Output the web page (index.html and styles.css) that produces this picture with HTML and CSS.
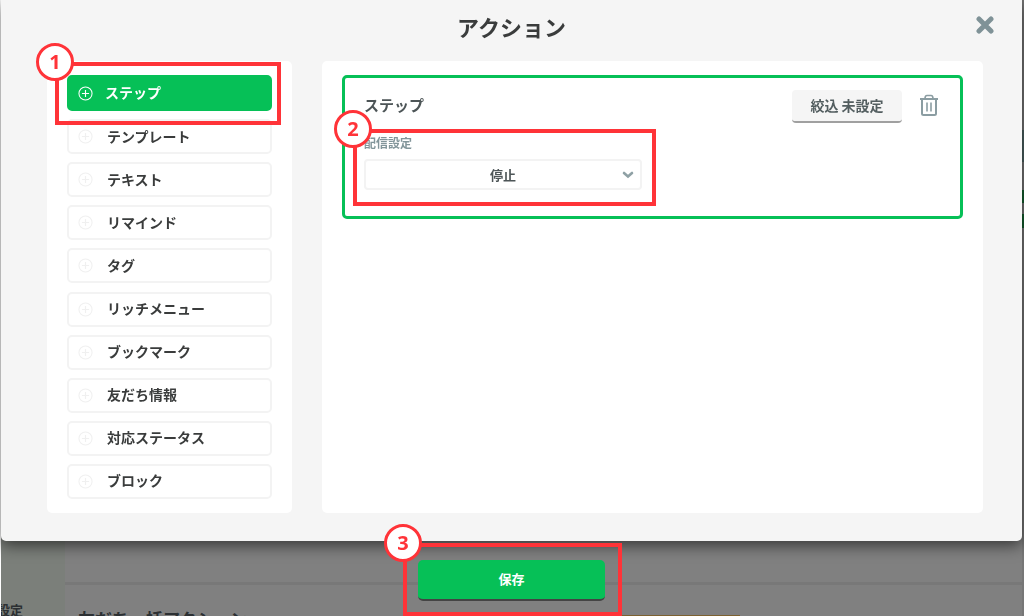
FILE: index.html
```html
<!DOCTYPE html>
<html lang="ja">
<head>
    <meta charset="UTF-8">
    <meta name="viewport" content="width=device-width, initial-scale=1.0">
    <title>アクション</title>
    <link rel="stylesheet" href="styles.css">
</head>
<body>
    <svg width="0" height="0" class="sprite" aria-hidden="true">
        <symbol id="plus" viewBox="0 0 16 16">
            <circle cx="8" cy="8" r="7" fill="none" stroke="currentColor" stroke-width="1.1"/>
            <path d="M8 4.2v7.6M4.2 8h7.6" fill="none" stroke="currentColor" stroke-width="1.2"/>
        </symbol>
    </svg>

    <div class="page">
        <aside class="page-side">設定</aside>
        <div class="page-main">
            <div class="page-row">
                <h2>友だち一括アクション</h2>
                <div class="page-button"></div>
            </div>
        </div>
        <div class="page-edge"></div>
    </div>

    <div class="overlay">
        <section class="modal">
            <header class="modal-header">
                <h1>アクション</h1>
                <button type="button" class="close" aria-label="閉じる">
                    <svg width="18" height="18" viewBox="0 0 18 18"><path d="M3 3l12 12M15 3L3 15" stroke="currentColor" stroke-width="5" stroke-linecap="round"/></svg>
                </button>
            </header>
            <div class="columns">
                <ul class="panel menu">
                    <li class="marked">
                        <button type="button" class="item active"><svg class="plus"><use href="#plus"/></svg>ステップ</button>
                        <div class="mark mark-step"><span class="num">1</span></div>
                    </li>
                    <li><button type="button" class="item"><svg class="plus"><use href="#plus"/></svg>テンプレート</button></li>
                    <li><button type="button" class="item"><svg class="plus"><use href="#plus"/></svg>テキスト</button></li>
                    <li><button type="button" class="item"><svg class="plus"><use href="#plus"/></svg>リマインド</button></li>
                    <li><button type="button" class="item"><svg class="plus"><use href="#plus"/></svg>タグ</button></li>
                    <li><button type="button" class="item"><svg class="plus"><use href="#plus"/></svg>リッチメニュー</button></li>
                    <li><button type="button" class="item"><svg class="plus"><use href="#plus"/></svg>ブックマーク</button></li>
                    <li><button type="button" class="item"><svg class="plus"><use href="#plus"/></svg>友だち情報</button></li>
                    <li><button type="button" class="item"><svg class="plus"><use href="#plus"/></svg>対応ステータス</button></li>
                    <li><button type="button" class="item"><svg class="plus"><use href="#plus"/></svg>ブロック</button></li>
                </ul>
                <div class="panel content">
                    <div class="card">
                        <div class="card-header">
                            <h3>ステップ</h3>
                            <button type="button" class="filter">絞込 未設定</button>
                            <button type="button" class="trash" aria-label="削除">
                                <svg width="20" height="24" viewBox="0 0 20 24" fill="none" stroke="currentColor">
                                    <path d="M1 6h18" stroke-width="2"/>
                                    <path d="M6 5.5C6 3.5 7 2.500 8 2.500h4c1 0 2 1 2 3" stroke-width="1.600"/>
                                    <path d="M3 6v14.500c0 1 .5 1.500 1.500 1.500h11c1 0 1.500-.5 1.500-1.500V6" stroke-width="2"/>
                                    <path d="M8 9.500v9M12 9.500v9" stroke-width="1.600"/>
                                </svg>
                            </button>
                        </div>
                        <div class="field marked">
                            <label for="delivery">配信設定</label>
                            <div class="select">
                                <select id="delivery" name="delivery">
                                    <option>停止</option>
                                </select>
                                <svg class="chevron" width="12" height="8" viewBox="0 0 12 8"><path d="M2 2l4 3.500L10 2" fill="none" stroke="currentColor" stroke-width="2.600" stroke-linecap="round"/></svg>
                            </div>
                            <div class="mark mark-field"><span class="num">2</span></div>
                        </div>
                    </div>
                </div>
            </div>
        </section>
        <div class="footer marked">
            <button type="button" class="save">保存</button>
            <div class="mark mark-save"><span class="num">3</span></div>
        </div>
    </div>
</body>
</html>
```
FILE: styles.css
```css
* {
    box-sizing: border-box;
}
body {
    margin: 0;
    height: 100vh;
    overflow: hidden;
    background-color: #fff;
    color: #3a3c3c;
    font-family: "Noto Sans CJK JP", sans-serif;
    font-weight: bold;
}
h1, h2, h3, ul {
    margin: 0;
    padding: 0;
}
button, select {
    font: inherit;
    color: inherit;
    border: none;
    background: none;
    padding: 0;
    cursor: pointer;
}
.sprite {
    position: absolute;
}

/* page behind the dialog */
.page {
    display: flex;
    height: 100vh;
    margin-left: 1px;
    overflow: hidden;
    background-color: #808080;
    color: #2c3033;
}
.page-side {
    display: flex;
    align-items: flex-end;
    width: 64px;
    overflow: hidden;
    background-color: #7b7f7a;
    font-size: 13px;
    line-height: 12px;
    text-indent: -4px;
    white-space: nowrap;
}
.page-main {
    display: flex;
    flex: 1;
    flex-direction: column;
    justify-content: flex-end;
}
.page-row {
    display: flex;
    justify-content: space-between;
    height: 34px;
    padding: 22px 282px 0 13px;
    border-top: 3px solid #787878;
}
.page-row h2 {
    font-size: 17px;
    line-height: 24px;
}
.page-button {
    width: 200px;
    height: 30px;
    margin-top: 8px;
    background-color: #7d6130;
}
.page-edge {
    width: 2px;
    background: linear-gradient(#777 130px, #4c6262 130px 162px, #777 162px 190px, #14602f 190px 203px, #777 203px 214px, #14602f 214px 228px, #777 228px);
}

/* dialog */
.overlay {
    position: fixed;
    inset: 0;
    padding: 0 2px 0 1px;
}
.modal {
    padding: 0 39px 28px 46px;
    border-radius: 0 0 5px 5px;
    background-color: #f5f5f5;
    box-shadow: 0 4px 16px rgba(0, 0, 0, 0.6);
}
.modal-header {
    display: flex;
    justify-content: center;
    align-items: center;
    height: 61px;
    margin: 0 -39px 0 -46px;
    padding-bottom: 10px;
}
.modal-header h1 {
    font-size: 22px;
    line-height: 30px;
}
.close {
    position: absolute;
    top: 16px;
    right: 30px;
    height: 18px;
    color: #7f9297;
}
.close svg, .trash svg {
    display: block;
}
.columns {
    display: grid;
    grid-template-columns: 245px 1fr;
    gap: 30px;
}
.panel {
    min-height: 452px;
    padding: 14px 20px;
    border-radius: 5px;
    background-color: #fff;
}
.menu {
    display: flex;
    flex-direction: column;
    justify-content: space-between;
    list-style: none;
}
.item {
    display: flex;
    align-items: center;
    gap: 14px;
    width: 100%;
    height: 35px;
    padding: 0 9px 2px;
    border: 2px solid #f3f3f3;
    border-radius: 5px;
    font-size: 14px;
}
.item.active {
    gap: 12px;
    height: 36px;
    border-color: #06c057;
    background-color: #06c057;
    color: #fff;
}
.plus {
    width: 15px;
    height: 15px;
    margin-top: 2px;
    color: #f0f0f0;
}
.active .plus {
    color: #fff;
}

.card {
    padding: 12px 19px 26px;
    border: 3px solid #06c057;
    border-radius: 5px;
}
.card-header {
    display: flex;
    align-items: center;
    height: 33px;
    margin-bottom: 12px;
}
.card-header h3 {
    flex: 1;
    padding-bottom: 4px;
    color: #4d5557;
    font-size: 15px;
    line-height: 20px;
}
.filter {
    width: 110px;
    height: 33px;
    padding-bottom: 2px;
    border-bottom: 2px solid #a0a0a0;
    border-radius: 4px;
    background-color: #f5f5f5;
    color: #535e60;
    font-size: 14px;
}
.trash {
    margin: 0 2px 0 17px;
    padding-bottom: 3px;
    color: #8b9da2;
}
.field {
    width: 278px;
}
.field label {
    display: block;
    margin-bottom: 8px;
    color: #82959a;
    font-size: 12px;
    line-height: 16px;
}
.select {
    position: relative;
}
.select select {
    display: block;
    width: 100%;
    height: 31px;
    border: 2px solid #f3f3f3;
    border-radius: 4px;
    background-color: #fff;
    color: #4d5557;
    font-size: 13px;
    text-align-last: center;
    appearance: none;
}
.chevron {
    position: absolute;
    top: 12px;
    right: 8px;
    color: #8fa1a5;
    pointer-events: none;
}

.footer {
    width: 187px;
    margin: 19px auto 0;
}
.save {
    display: block;
    width: 100%;
    height: 41px;
    padding-bottom: 3px;
    border-bottom: 2px solid #444;
    border-radius: 5px;
    background-color: #06c057;
    color: #fff;
    font-size: 13px;
}

/* numbered red frames */
.marked {
    position: relative;
}
.mark {
    position: absolute;
    z-index: 1;
    border: 4px solid #ff3338;
    pointer-events: none;
}
.mark-step {
    inset: -13px -9px -14px -12px;
}
.mark-field {
    inset: -6px -14px -16px -11px;
}
.mark-save {
    inset: -17px -17px -15px -15px;
}
.num {
    position: absolute;
    top: -23px;
    left: -23px;
    width: 38px;
    height: 38px;
    border: 3px solid #ff3338;
    border-radius: 50%;
    background-color: #fff;
    color: #ff3338;
    font-family: "Open Sans", sans-serif;
    font-size: 20px;
    line-height: 32px;
    text-align: center;
}
```
